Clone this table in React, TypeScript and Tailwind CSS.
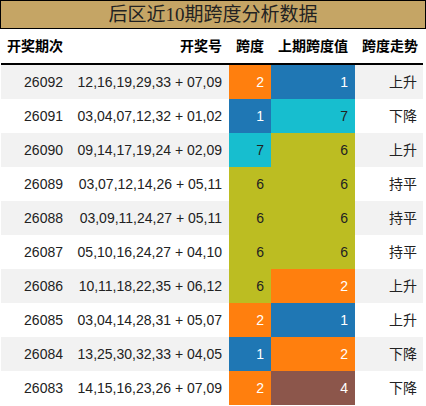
const rows = [
  { issue: "26092", nums: "12,16,19,29,33 + 07,09", span: 2, prev: 1, trend: "上升" },
  { issue: "26091", nums: "03,04,07,12,32 + 01,02", span: 1, prev: 7, trend: "下降" },
  { issue: "26090", nums: "09,14,17,19,24 + 02,09", span: 7, prev: 6, trend: "上升" },
  { issue: "26089", nums: "03,07,12,14,26 + 05,11", span: 6, prev: 6, trend: "持平" },
  { issue: "26088", nums: "03,09,11,24,27 + 05,11", span: 6, prev: 6, trend: "持平" },
  { issue: "26087", nums: "05,10,16,24,27 + 04,10", span: 6, prev: 6, trend: "持平" },
  { issue: "26086", nums: "10,11,18,22,35 + 06,12", span: 6, prev: 2, trend: "上升" },
  { issue: "26085", nums: "03,04,14,28,31 + 05,07", span: 2, prev: 1, trend: "上升" },
  { issue: "26084", nums: "13,25,30,32,33 + 04,05", span: 1, prev: 2, trend: "下降" },
  { issue: "26083", nums: "14,15,16,23,26 + 07,09", span: 2, prev: 4, trend: "下降" },
];

// tab10-ish palette per span value
const cellColor: Record<number, string> = {
  1: "bg-[#1f77b4] text-white",
  2: "bg-[#ff7f0e] text-white",
  4: "bg-[#8c564b] text-white",
  6: "bg-[#bcbd22] text-[#222]",
  7: "bg-[#17becf] text-[#222]",
};

const cols = "grid grid-cols-[69px_159px_42px_84px_68px]";

export default function App() {
  return (
    <div className="w-[426px] h-[406px] bg-white font-['Liberation_Sans','Noto_Sans_CJK_SC',sans-serif] text-[#222]">
      <div className="h-[29px] border border-black bg-[#c5a565] flex items-center justify-center text-[19px] text-[#222] font-['Liberation_Serif','Noto_Sans_CJK_SC',serif] leading-none">
        后区近10期跨度分析数据
      </div>
      <div className="w-[422px] ml-px">
        <div className={`${cols} h-[36px] border-b-2 border-black text-[14px] font-bold text-black`}>
          <div className="flex items-center justify-end pr-[7px]">开奖期次</div>
          <div className="flex items-center justify-end pr-[7px]">开奖号</div>
          <div className="flex items-center justify-end pr-[7px]">跨度</div>
          <div className="flex items-center justify-end pr-[7px]">上期跨度值</div>
          <div className="flex items-center justify-end pr-[5px]">跨度走势</div>
        </div>
        {rows.map((r, i) => (
          <div
            key={r.issue}
            className={`${cols} h-[34px] text-[14px] ${i % 2 === 0 ? "bg-[#f2f2f2]" : "bg-white"}`}
          >
            <div className="flex items-center justify-end pr-[7px]">{r.issue}</div>
            <div className="flex items-center justify-end pr-[7px]">{r.nums}</div>
            <div className={`flex items-center justify-end pr-[7px] ${cellColor[r.span]}`}>{r.span}</div>
            <div className={`flex items-center justify-end pr-[7px] ${cellColor[r.prev]}`}>{r.prev}</div>
            <div className="flex items-center justify-end pr-[6px]">{r.trend}</div>
          </div>
        ))}
      </div>
    </div>
  );
}
